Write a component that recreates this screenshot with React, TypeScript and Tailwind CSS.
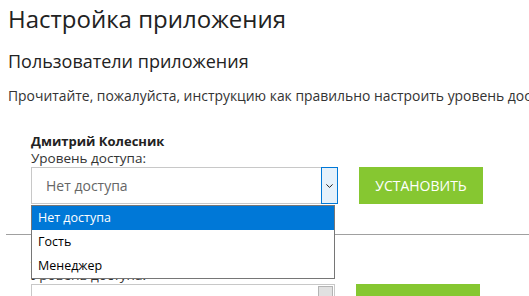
import React from 'react';

const options = ['Нет доступа', 'Гость', 'Менеджер'];

const Chevron: React.FC = () => (
  <svg width="7" height="4" viewBox="0 0 7 4" fill="none">
    <path d="M0.4 0.4L3.5 3.4L6.6 0.4" stroke="#222" strokeWidth="1" />
  </svg>
);

const UserBlock: React.FC<{ name: string; open?: boolean }> = ({ name, open }) => (
  <div className="pt-[15px] pb-[30px] pl-[23px]">
    <div className="text-[13px] leading-[17px] font-bold text-[#222]">{name}</div>
    <div className="text-[13.5px] leading-[17px] text-[#333]">Уровень доступа:</div>
    <div className="flex items-start">
      <div className="relative">
        {open ? (
          <div className="flex h-[37px] w-[307px]">
            <div className="flex-1 flex items-center border border-r-0 border-[#c8c8c8] pl-[14px] text-[14px] text-[#666]">
              Нет доступа
            </div>
            <div className="w-[17px] flex items-center justify-center border border-[#0078d7] bg-[#e5f1fb]">
              <Chevron />
            </div>
          </div>
        ) : (
          <div className="flex h-[37px] w-[304px] border border-[#c8c8c8] p-px">
            <div className="flex-1" />
            <div className="w-[15px] border border-[#b4b4b4] bg-[#e1e1e1]" />
          </div>
        )}
        {open && (
          <div className="absolute left-0 top-[38px] z-10 w-[304px] border border-[#767676] bg-white text-[12.5px] text-black">
            {options.map((o, i) => (
              <div
                key={o}
                className={`h-[24px] flex items-center pl-[6px] ${i === 0 ? 'bg-[#0078d7] text-white' : ''}`}
              >
                {o}
              </div>
            ))}
          </div>
        )}
      </div>
      <button className="ml-[21px] h-[37px] w-[124px] bg-[#86c731] text-[14px] text-white uppercase">
        Установить
      </button>
    </div>
  </div>
);

export default function App() {
  return (
    <div
      className="w-[529px] h-[296px] overflow-hidden bg-white px-2 text-[#333]"
      style={{ fontFamily: '"Open Sans", "Noto Sans", sans-serif' }}
    >
      <h1 className="mt-[3px] text-[24px] leading-[32px] text-[#222]">Настройка приложения</h1>
      <h2 className="mt-[14px] text-[18px] leading-[24px] text-[#222]">Пользователи приложения</h2>
      <p className="mt-[14px] mb-[13px] text-[13.9px] leading-[18px] whitespace-nowrap">
        Прочитайте, пожалуйста, инструкцию как правильно настроить уровень доступа для каждого пользователя.
      </p>
      <UserBlock name="Дмитрий Колесник" open />
      <hr className="-ml-[2px] w-[600px] border-0 border-t border-[#a0a0a0]" />
      <UserBlock name="Анна Петрова" />
    </div>
  );
}
